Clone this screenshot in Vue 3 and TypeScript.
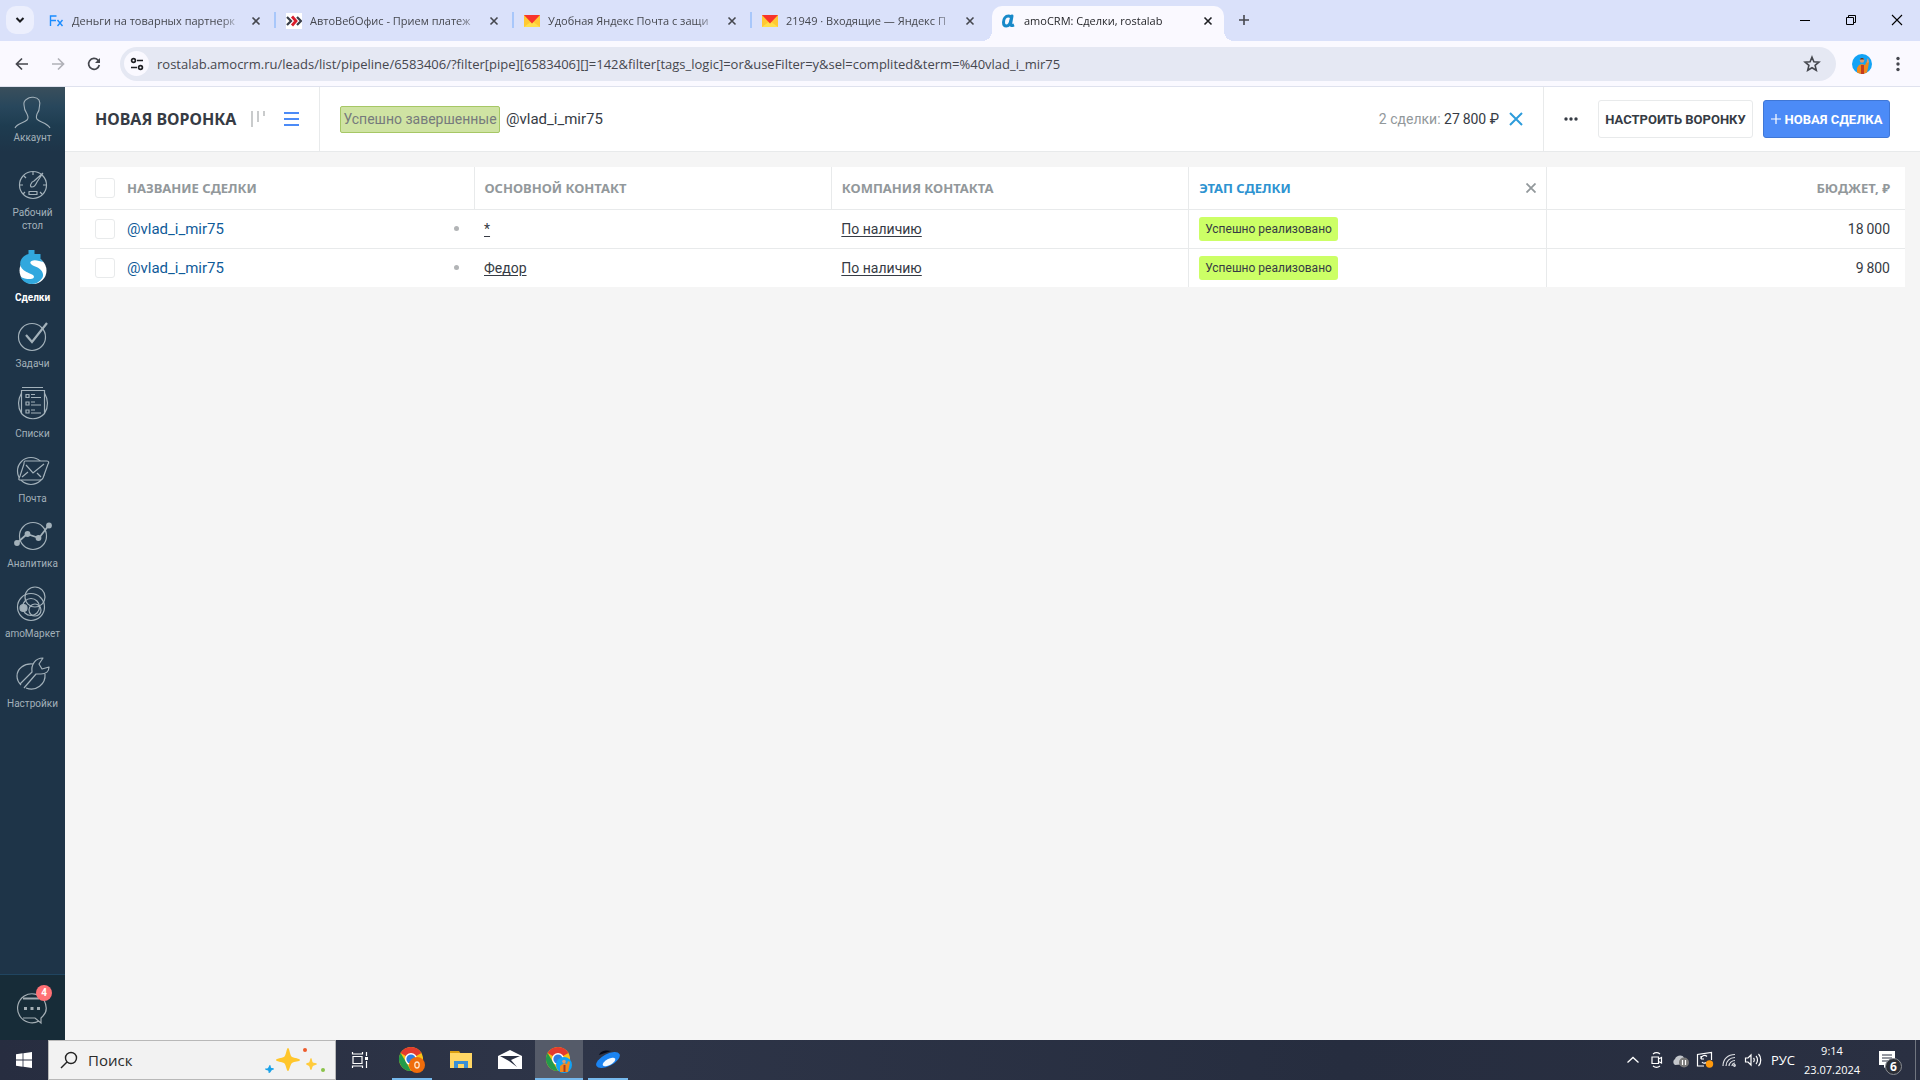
<script setup lang="ts">
import { ref } from 'vue'

interface Tab { icon: string; title: string; active?: boolean }
interface NavItem { icon: string; label: string; gap: string; active?: boolean }
interface Deal { id: number; name: string; contact: string; company: string; stage: string; budget: string }

const tabs: Tab[] = [
  { icon: 'fx', title: 'Деньги на товарных партнерк' },
  { icon: 'avo', title: 'АвтоВебОфис - Прием платеж' },
  { icon: 'mail', title: 'Удобная Яндекс Почта с защи' },
  { icon: 'mail', title: '21949 · Входящие — Яндекс П' },
  { icon: 'amo', title: 'amoCRM: Сделки, rostalab', active: true },
]

const nav: NavItem[] = [
  { icon: 'desk', label: 'Рабочий стол', gap: 'desk' },
  { icon: 'deals', label: 'Сделки', gap: 'deals', active: true },
  { icon: 'tasks', label: 'Задачи', gap: 'tasks' },
  { icon: 'lists', label: 'Списки', gap: 'lists' },
  { icon: 'post', label: 'Почта', gap: 'post' },
  { icon: 'stats', label: 'Аналитика', gap: 'stats' },
  { icon: 'market', label: 'amoМаркет', gap: 'market' },
  { icon: 'settings', label: 'Настройки', gap: 'settings' },
]

const deals: Deal[] = [
  { id: 1, name: '@vlad_i_mir75', contact: '*', company: 'По наличию', stage: 'Успешно реализовано', budget: '18\u2009000' },
  { id: 2, name: '@vlad_i_mir75', contact: 'Федор', company: 'По наличию', stage: 'Успешно реализовано', budget: '9\u2009800' },
]

const url = ref('rostalab.amocrm.ru/leads/list/pipeline/6583406/?filter[pipe][6583406][]=142&filter[tags_logic]=or&useFilter=y&sel=complited&term=%40vlad_i_mir75')
const term = ref('@vlad_i_mir75')
</script>

<template>
  <div class="screen">
    <div class="tabstrip">
      <button class="tab-search" aria-label="Поиск вкладок">
        <svg width="10" height="8" viewBox="0 0 10 8"><path d="M1.500 2 5 5.500 8.500 2" fill="none" stroke="#1b1c20" stroke-width="2" /></svg>
      </button>
      <div class="tabs">
        <div v-for="(t, i) in tabs" :key="i" class="tab" :class="{ active: t.active }">
          <svg class="fav" width="16" height="16" viewBox="0 0 16 16">
            <g v-if="t.icon === 'fx'" fill="none" stroke="#1a8cff" stroke-width="1.400"><path d="M2.500 13V3H8.500M2.500 7.500H8M9.500 7l5 6M14.500 7l-5 6" /></g>
            <g v-else-if="t.icon === 'avo'"><path fill="#fff" d="M0 0h16v16H0z" /><path d="m1 4 4 4-4 4M11 4l4 4-4 4" fill="none" stroke="#3a3f4a" stroke-width="2.200" /><path d="m6 3.500 4 4.500-4 4.500" fill="none" stroke="#d81e2c" stroke-width="2.800" /></g>
            <g v-else-if="t.icon === 'mail'"><path fill="#ffc933" d="M0 2h16v12H0z" /><path fill="#ffe04a" d="m0 14 8-6 8 6z" /><path fill="#f8342c" d="M0 2h16l-8 8.500z" /></g>
            <g v-else><path d="M10 5c-.5-1.500-1.500-2-3-2-3 0-5 3-5 6.200C2 11.500 3 13 4.800 13c2.700 0 4.200-3.500 4.700-6.500L10.500 3l-1.300 7.500c-.2 1.600.6 2.400 1.800 2l1.500-.6" transform="translate(1.500)" fill="none" stroke="#1789c9" stroke-width="3" stroke-linejoin="round" /></g>
          </svg>
          <span class="tab-title">{{ t.title }}</span>
          <button class="tab-close" aria-label="Закрыть вкладку">
            <svg width="10" height="10" viewBox="0 0 10 10"><path d="m1.500 1.500 7 7m0-7-7 7" stroke="currentColor" stroke-width="1.600" /></svg>
          </button>
        </div>
      </div>
      <button class="tab-new" aria-label="Новая вкладка">
        <svg width="12" height="12" viewBox="0 0 12 12"><path d="M6 1v10M1 6h10" stroke="#45474e" stroke-width="1.600" /></svg>
      </button>
      <div class="win">
        <button aria-label="Свернуть"><svg width="12" height="12" viewBox="0 0 12 12"><path d="M1 6.500h10" stroke="#000" /></svg></button>
        <button aria-label="Восстановить"><svg width="12" height="12" viewBox="0 0 12 12"><path d="M1.500 3.500h7v7h-7zM3.500 3.500v-2h7v7h-2" fill="none" stroke="#000" /></svg></button>
        <button aria-label="Закрыть"><svg width="12" height="12" viewBox="0 0 12 12"><path d="m1 1 10 10m0-10L1 11" stroke="#000" stroke-width="1.100" /></svg></button>
      </div>
    </div>

    <div class="toolbar">
      <button class="tool" aria-label="Назад"><svg width="16" height="16" viewBox="0 0 16 16"><path d="M14 8H3M8 2.500 2.500 8 8 13.500" fill="none" stroke="#45474e" stroke-width="1.700" /></svg></button>
      <button class="tool" aria-label="Вперёд"><svg width="16" height="16" viewBox="0 0 16 16"><path d="M2 8h11M8 2.500 13.500 8 8 13.500" fill="none" stroke="#b0b1b8" stroke-width="1.700" /></svg></button>
      <button class="tool" aria-label="Обновить"><svg width="16" height="16" viewBox="0 0 16 16"><path d="M13.300 9A5.400 5.400 0 1 1 12 4.200L13.500 6" fill="none" stroke="#45474e" stroke-width="1.700" /><path d="M14 2v5H9z" fill="#45474e" /></svg></button>
      <div class="omnibox">
        <button class="site" aria-label="Сведения о сайте"><svg width="16" height="16" viewBox="0 0 16 16" fill="none" stroke="#1f2024" stroke-width="1.700"><circle cx="4.500" cy="4.500" r="1.900" /><path d="M8 4.500h6M2 11.500h6" /><circle cx="11.500" cy="11.500" r="1.900" /></svg></button>
        <input v-model="url" class="url" type="text" aria-label="Адресная строка" spellcheck="false" />
        <button class="star" aria-label="В закладки"><svg width="18" height="18" viewBox="0 0 18 18"><path d="m9 2.200 1.900 4.600 5 .4-3.800 3.200 1.200 4.900L9 12.700l-4.300 2.600 1.200-4.900-3.800-3.200 5-.4z" fill="none" stroke="#45474e" stroke-width="1.600" /></svg></button>
      </div>
      <button class="profile" aria-label="Профиль">
        <svg width="20" height="20" viewBox="0 0 20 20"><circle cx="10" cy="10" r="10" fill="#12a3f5" /><path d="M5 18.500V14l2-3 3-1 3 1 2-4 2 1-1 6-1 4.500a10 10 0 0 1-10 0z" fill="#f08a1c" /><circle cx="10" cy="6.500" r="2.200" fill="#d99a72" /><path d="M8 5.500c0-2 4-2 4 0z" fill="#5b3524" /><path d="M9 11h3v9H9z" fill="#c43c20" /><path d="m15 6 1-2 1 4-2 1z" fill="#d99a72" /></svg>
      </button>
      <button class="menu" aria-label="Меню"><svg width="4" height="16" viewBox="0 0 4 16" fill="#45474e"><circle cx="2" cy="2.500" r="1.700" /><circle cx="2" cy="8" r="1.700" /><circle cx="2" cy="13.500" r="1.700" /></svg></button>
    </div>

    <div class="app">
      <nav class="side">
        <a class="account" href="#">
          <svg width="38" height="34" viewBox="0 0 38 34"><path d="M1 32c2-5 9-5 12-8 2-2 1-4 0-6-2-3-3-6-3-9-.5-3 1-5 3-6 3-3 10-2 12 1 1 2 1 4 .5 6 0 3-1 6-2.500 8-1 3-1 5 1 6 3 2.500 9 3 12 8" fill="none" stroke="#a3b1ba" stroke-width="1.100" /></svg>
          <span>Аккаунт</span>
        </a>
        <a v-for="n in nav" :key="n.icon" href="#" class="nav" :class="[n.gap, { on: n.active }]">
          <svg width="40" height="38" viewBox="0 0 40 38" fill="none" stroke="#a3b1ba" stroke-width="1.200">
            <g v-if="n.icon === 'desk'"><circle cx="20" cy="19" r="13.500" /><path d="M20 6v3M7 19h3M30 19h3M11 10l2 2M10 28l2-2M29 28l-2-2M30 7 21 15c-3 1-5 6-2 6s4-3 5-5l6-9M16 25.500h8v3h-8z" stroke-linejoin="round" /></g>
            <g v-else-if="n.icon === 'deals'" stroke="none"><circle cx="20" cy="22.500" r="13.500" fill="#fff" /><path d="M15.500 2h6v4h6v5l3 3c-4-1-9-3-12-1-3 2 0 4 5 6 7 3 8 9 5 12-2 3-6 5-10 5-5 0-9-3-11-7 4 2 11 3 13 1 2-3-3-4-7-6-6-3-8-8-5-13 2-3 4-4 7-5z" fill="#31a8de" /></g>
            <g v-else-if="n.icon === 'tasks'"><circle cx="19" cy="20" r="13.500" /><path d="m13 18 6 7L34 6" stroke-width="2.200" /></g>
            <g v-else-if="n.icon === 'lists'"><path d="M9 2.500h21M8.500 5.500h23v23c-6 7-17 7-23 0zM8.500 8C4.500 15 4.500 22 8.500 28.500M31.500 8c4 7 4 14 0 20.500" /><path d="M13 9.500h3v3h-3zM13 17h3v3h-3zM13 25h3v3h-3zM18 9.500h4M18 12.500h10M18 17h4M18 20h10M18 25h4M18 28h10" /></g>
            <g v-else-if="n.icon === 'post'"><circle cx="18" cy="19" r="13.500" /><path d="M12 9h22c2 0 2 2 1 3l-5 14c-1 2-2 2-3 2H7c-2 0-1-2 0-4l4-12c0-2 0-3 1-3z" fill="#1e3448" /><path d="m13 13 7 8 11-9M9 25l6-5M24 21l4 4" /></g>
            <g v-else-if="n.icon === 'stats'"><circle cx="20" cy="19" r="13.500" /><path d="m4 26 10-9 12 4L36 8" stroke-width="1.800" /><g fill="#a3b1ba" stroke="none"><circle cx="4" cy="26" r="2.900" /><circle cx="14.500" cy="17" r="2.900" /><circle cx="25.500" cy="21" r="2.900" /><circle cx="36" cy="8.500" r="2.900" /></g></g>
            <g v-else-if="n.icon === 'market'"><circle cx="18" cy="22" r="13.500" /><circle cx="22" cy="12" r="10" /><circle cx="18" cy="22" r="8.500" /><circle cx="22" cy="25" r="6" /><circle cx="10.500" cy="23" r="3.500" fill="#a3b1ba" /></g>
            <g v-else><path d="M20 9C11 8 4 14 4 21c0 4 2 7 4 9M13 33c10 4 20-4 19-14" /><path d="M7 29 19 17c-1-7 3-14 11-14l-4 6 3 5 7-2c0 4-3 7-8 7h-5L11 33" stroke-linejoin="round" /></g>
          </svg>
          <span>{{ n.label }}</span>
        </a>
        <button class="chat" aria-label="Чаты">
          <svg width="34" height="34" viewBox="0 0 34 34" fill="none" stroke="#a3adb3" stroke-width="1.200"><path d="M23 30a14.500 14.500 0 1 1 5-21c3 6 3 12-1 16l-2 2v5l-6-5H7" /><path d="M7 7.500h16" stroke-width="2" /><g fill="#a3adb3" stroke="none"><path d="M8 16h3v3H8zM14.500 16h3v3h-3zM21 16h3v3h-3z" /></g></svg>
          <span class="badge">4</span>
        </button>
      </nav>

      <main class="main">
        <header class="head">
          <div class="head-left">
            <h1>НОВАЯ ВОРОНКА</h1>
            <button class="view kanban" aria-label="Воронка"><svg width="16" height="16" viewBox="0 0 16 16" fill="#c9cbcc"><path d="M1 0h2v16H1zM7 0h2v11H7zM13 0h2v5h-2z" /></svg></button>
            <button class="view" aria-label="Список"><svg width="16" height="16" viewBox="0 0 16 16" fill="#4c8bf7"><path d="M0 1h15v2H0zM0 7h15v2H0zM0 13h15v2H0z" /></svg></button>
          </div>
          <div class="head-search">
            <button class="chip">Успешно завершенные</button>
            <input v-model="term" type="text" class="term" aria-label="Поиск и фильтр" />
            <div class="sum"><span>2 сделки:</span> <b>27&#8201;800 ₽</b></div>
            <button class="clear" aria-label="Сбросить"><svg width="14" height="14" viewBox="0 0 14 14"><path d="m1 1 12 12m0-12L1 13" stroke="#2d9cdb" stroke-width="2" /></svg></button>
          </div>
          <div class="head-actions">
            <button class="more" aria-label="Ещё"><svg width="14" height="4" viewBox="0 0 14 4" fill="#363b44"><circle cx="2" cy="2" r="1.700" /><circle cx="7" cy="2" r="1.700" /><circle cx="12" cy="2" r="1.700" /></svg></button>
            <button class="btn plain">НАСТРОИТЬ ВОРОНКУ</button>
            <button class="btn primary"><svg width="10" height="10" viewBox="0 0 10 10"><path d="M5 0v10M0 5h10" stroke="#fff" stroke-width="1.200" /></svg>НОВАЯ СДЕЛКА</button>
          </div>
        </header>

        <div class="table-wrap">
          <table>
            <colgroup><col class="c-name" /><col /><col /><col /><col class="c-budget" /></colgroup>
            <thead>
              <tr>
                <th><div class="cell"><input type="checkbox" aria-label="Выбрать все" /><span>НАЗВАНИЕ СДЕЛКИ</span></div></th>
                <th>ОСНОВНОЙ КОНТАКТ</th>
                <th>КОМПАНИЯ КОНТАКТА</th>
                <th class="sorted"><div class="cell between"><span>ЭТАП СДЕЛКИ</span><button aria-label="Сбросить сортировку"><svg width="10" height="10" viewBox="0 0 10 10"><path d="m.5.5 9 9m0-9-9 9" stroke="#92989b" stroke-width="1.800" /></svg></button></div></th>
                <th class="num">БЮДЖЕТ, ₽</th>
              </tr>
            </thead>
            <tbody>
              <tr v-for="d in deals" :key="d.id">
                <td><div class="cell"><input type="checkbox" :aria-label="d.name" /><a href="#" class="deal">{{ d.name }}</a><i class="dot"></i></div></td>
                <td><a href="#" class="ref">{{ d.contact }}</a></td>
                <td><a href="#" class="ref">{{ d.company }}</a></td>
                <td class="line"><span class="stage">{{ d.stage }}</span></td>
                <td class="num line">{{ d.budget }}</td>
              </tr>
            </tbody>
          </table>
        </div>
      </main>
    </div>

    <footer class="taskbar">
      <button class="start" aria-label="Пуск"><svg width="16" height="16" viewBox="0 0 16 16" fill="#fff"><path d="M0 2.300 6.600 1.300v6.300H0zM7.400 1.200 16 0v7.600H7.400zM0 8.400h6.600v6.300L0 13.700zM7.400 8.400H16V16l-8.600-1.200z" /></svg></button>
      <label class="find">
        <svg width="18" height="18" viewBox="0 0 18 18" fill="none" stroke="#222" stroke-width="1.400"><circle cx="11" cy="7" r="5.500" /><path d="m7 11-6 6" /></svg>
        <input type="text" placeholder="Поиск" aria-label="Поиск" />
        <svg width="62" height="26" viewBox="0 0 62 26"><path d="M24 1c1.500 0 2 8 4 9s8 1.500 8 3-6 1.500-8 3-2.500 8-4 8-2-7-4-8-8-1.500-8-3 6-2 8-3 2.500-9 4-9z" fill="#ffc62b" /><path d="M47 11c1 0 1 4 2 4.500s4 .5 4 1.500-3 1-4 2-1 4-2 4-1-3-2-4-3-1-3-2 2-1 3-1.500 1-4.500 2-4.500z" fill="#ffcb3c" /><path d="M6 18c1 0 .5 3 1.500 3s2.500 0 2.500 1-2 .5-2.500 1.500S6 26 5 26s0-2-1-2.500S1 23 1 22s2 0 3-1 1-3 2-3z" fill="#1ba2e8" /><circle cx="41" cy="3" r="2" fill="#ee5b2b" /><circle cx="59" cy="23" r="2" fill="#8bc34a" /></svg>
      </label>
      <div class="apps">
        <button class="views" aria-label="Представление задач"><svg width="18" height="18" viewBox="0 0 18 18" fill="none" stroke="#fff" stroke-width="1.200"><path d="M2 5.500h9v7H2zM1.500 1v2h10V1M1.500 17v-2h10v2M15.500 1v4M15.500 10v7" /><path d="M14 6h3v3h-3z" fill="#fff" stroke="none" /></svg></button>
        <button class="run" aria-label="Chrome">
          <svg width="28" height="28" viewBox="0 0 28 28"><circle cx="13" cy="13" r="12" fill="#fbc116" /><path d="M13 13 2.600 7a12 12 0 0 1 20.800 0z" fill="#e33b2e" /><path d="M2.600 7 8 16l5 9A12 12 0 0 1 2.600 7z" fill="#229a4b" /><circle cx="13" cy="13" r="6" fill="#fff" /><circle cx="13" cy="13" r="4.600" fill="#2f7de1" /><circle cx="19" cy="19" r="8" fill="#ef6c0b" /><ellipse cx="19" cy="19" rx="2.200" ry="3" fill="none" stroke="#ffe4c8" stroke-width="1.300" /></svg>
        </button>
        <button aria-label="Проводник"><svg width="22" height="20" viewBox="0 0 22 20"><path d="M0 1h9l2 3H0z" fill="#dba011" /><path d="M0 3h22v15H0z" fill="#ffd765" /><path d="M4 18v-7h14v7h-4v-4H8v4z" fill="#3b90d6" /></svg></button>
        <button aria-label="Почта"><svg width="24" height="20" viewBox="0 0 24 20"><path d="M0 6 12 0l12 6v13H0z" fill="#fff" /><path d="M2 6h20L13 10l6 7-8-6z" fill="#2a3042" /></svg></button>
        <button class="run current" aria-label="Chrome amoCRM">
          <svg width="28" height="28" viewBox="0 0 28 28"><circle cx="13" cy="13" r="12" fill="#fbc116" /><path d="M13 13 2.600 7a12 12 0 0 1 20.800 0z" fill="#e33b2e" /><path d="M2.600 7 8 16l5 9A12 12 0 0 1 2.600 7z" fill="#229a4b" /><circle cx="13" cy="13" r="6" fill="#fff" /><circle cx="13" cy="13" r="4.600" fill="#2f7de1" /><circle cx="19" cy="19" r="8" fill="#12a3f5" /><path d="M15 26v-6l4-3 3 1 1-3 2 1-2 10z" fill="#f08a1c" /><circle cx="19" cy="15.500" r="1.800" fill="#d99a72" /><path d="M18.500 19h2v7h-2z" fill="#a83a20" /></svg>
        </button>
        <button class="run" aria-label="Браузер"><svg width="26" height="22" viewBox="0 0 26 22"><path d="M4 6c2-5 8-5 12-4z" fill="#060a18" /><ellipse cx="13" cy="11" rx="13" ry="6" transform="rotate(-28 13 11)" fill="#1b84f2" /><ellipse cx="14" cy="13" rx="7" ry="3" transform="rotate(-28 14 13)" fill="#f4faff" /></svg></button>
      </div>
      <div class="tray">
        <button aria-label="Скрытые значки"><svg width="14" height="14" viewBox="0 0 14 14"><path d="m1.500 9.500 5.500-5 5.500 5" fill="none" stroke="#fff" stroke-width="1.300" /></svg></button>
        <button aria-label="Камера"><svg width="14" height="16" viewBox="0 0 14 16" fill="none" stroke="#fff" stroke-width="1.200"><path d="M2 5h6.500v6.500H2zM8.500 7l3-1.500v5.500l-3-1.500M3 2c2-1.500 5-1.500 7 0M3 14c2 1.500 5 1.500 7 0" /></svg></button>
        <button aria-label="OneDrive"><svg width="18" height="16" viewBox="0 0 18 16"><path d="M3 13a3.500 3.500 0 0 1 0-6c1-4 8-5 9-1 3 0 4 3 3 6z" fill="#c3c6cb" /><circle cx="12" cy="10.500" r="5" fill="#777" /><path d="M10.500 8v5M13.500 8v5" stroke="#fff" stroke-width="1.200" /></svg></button>
        <button aria-label="Обновления"><svg width="18" height="18" viewBox="0 0 18 18"><path d="M8 15H1.500V3.500L15.500 1.500V9" fill="none" stroke="#fff" stroke-width="1.200" /><path d="M11 5.500A3.500 3.500 0 0 0 5 8M5 8V5M5 8h3M6 11c1 1.500 3 1.500 4 .5" fill="none" stroke="#fff" stroke-width="1.200" /><circle cx="13.500" cy="13" r="3.700" fill="#ff9a0e" /></svg></button>
        <button aria-label="Сеть"><svg width="14" height="14" viewBox="0 0 14 14" fill="none" stroke="#dfe1e5" stroke-width="1.200"><path d="M1 13C1 6 6 1.500 13 1.500M4 13c0-5 4-8.500 9-8.500M7 13c0-3 3-5.500 6-5.500M10 13c0-1.500 1.500-3 3-3" /><circle cx="12.500" cy="12.500" r=".8" /></svg></button>
        <button aria-label="Громкость"><svg width="18" height="14" viewBox="0 0 18 14" fill="none" stroke="#fff" stroke-width="1.200"><path d="M1.500 5h2.500l3-3v10l-3-3H1.500zM9.500 5c1 1 1 3 0 4M12 3c2 2 2 6 0 8M14.500 1c3 3 3 9 0 12" /></svg></button>
        <button class="lang">РУС</button>
        <button class="clock"><span>9:14</span><span>23.07.2024</span></button>
        <button class="notes" aria-label="Уведомления"><svg width="16" height="18" viewBox="0 0 16 18"><path d="M0 0h16v14H9l-4 3v-3H0z" fill="#fff" /><path d="M3 4h10M3 7h10M3 10h6" stroke="#2a3042" stroke-width="1.200" /></svg><span>6</span></button>
        <button class="peek" aria-label="Свернуть все окна"></button>
      </div>
    </footer>
  </div>
</template>

<style>
body {
  margin: 0;
}
</style>

<style scoped>
.screen {
  display: flex;
  flex-direction: column;
  min-height: 100vh;
  background: #f5f5f5;
  font-family: Roboto, "Liberation Sans", sans-serif;
  font-size: 14px;
  color: #363b44;
}
.screen * {
  box-sizing: border-box;
}
button {
  display: flex;
  align-items: center;
  justify-content: center;
  flex: none;
  margin: 0;
  padding: 0;
  border: 0;
  background: none;
  font: inherit;
  color: inherit;
  white-space: nowrap;
}
input {
  margin: 0;
  padding: 0;
  border: 0;
  outline: 0;
  background: none;
  font: inherit;
  color: inherit;
}
svg {
  display: block;
  flex: none;
}
a {
  color: inherit;
  text-decoration: none;
}

/* browser frame */
.tabstrip {
  display: flex;
  height: 41px;
  background: #dae1fa;
  font-family: "Open Sans", "Noto Sans", sans-serif;
  font-size: 11px;
}
.tab-search {
  width: 28px;
  height: 28px;
  margin: 6px 6px 0;
  border-radius: 10px;
  background: #eceffd;
}
.tabs {
  display: flex;
  gap: 6px;
  padding-top: 6px;
}
.tab {
  position: relative;
  display: flex;
  align-items: center;
  width: 232px;
  height: 35px;
  padding: 0 8px 6px 8px;
  color: #45474e;
}
.tab:not(.active)::after {
  content: "";
  position: absolute;
  right: -4px;
  top: 6px;
  width: 2px;
  height: 16px;
  background: #a8c7fa;
}
.tab:nth-child(4)::after {
  display: none;
}
.tab.active {
  border-radius: 10px 10px 0 0;
  background: #faf9ff;
  color: #1f2024;
}
.tab.active::before,
.tab.active::after {
  content: "";
  position: absolute;
  bottom: 0;
  width: 10px;
  height: 10px;
}
.tab.active::before {
  left: -10px;
  background: radial-gradient(circle at 0 0, transparent 10px, #faf9ff 10px);
}
.tab.active::after {
  right: -10px;
  background: radial-gradient(circle at 100% 0, transparent 10px, #faf9ff 10px);
}
.tab-title {
  flex: 1;
  min-width: 0;
  margin-left: 8px;
  white-space: nowrap;
  mask-image: linear-gradient(to right, #000 148px, transparent 172px);
}
.tab-close {
  width: 16px;
  height: 16px;
  margin-left: 8px;
}
.tab-new {
  width: 28px;
  height: 28px;
  margin: 6px 0 0 6px;
}
.win {
  display: flex;
  margin-left: auto;
}
.win button {
  width: 46px;
  height: 40px;
}
.toolbar {
  display: flex;
  align-items: center;
  height: 46px;
  padding: 0 12px 0 4px;
  border-bottom: 1px solid #dfe2ee;
  background: #faf9ff;
  color: #45474e;
}
.tool {
  width: 36px;
  height: 34px;
}
.omnibox {
  display: flex;
  align-items: center;
  flex: 1;
  height: 34px;
  margin-left: 8px;
  padding: 0 15px 0 4px;
  border-radius: 17px;
  background: #e5e8f3;
}
.site {
  width: 25px;
  height: 25px;
  border-radius: 50%;
  background: #faf9ff;
}
.url {
  flex: 1;
  min-width: 0;
  margin-left: 8px;
  font: 13px "Open Sans", "Noto Sans", sans-serif;
}
.profile {
  width: 20px;
  height: 20px;
  margin-left: 16px;
}
.menu {
  width: 32px;
  height: 32px;
  margin-left: 10px;
  margin-right: -6px;
}

/* side navigation */
.app {
  display: flex;
  flex: 1;
}
.side {
  display: flex;
  flex-direction: column;
  flex: none;
  width: 65px;
  background: #1e3448;
  color: #a3b1ba;
  font-size: 10px;
  line-height: 13px;
  text-align: center;
}
.account {
  display: flex;
  flex-direction: column;
  align-items: center;
  height: 65px;
  padding-top: 9px;
  background: linear-gradient(#3a4f5c, #28475c 30%, #1e3c50 60%, #1e3448);
}
.account span {
  margin-top: 1px;
}
.nav {
  display: flex;
  flex-direction: column;
  align-items: center;
}
.nav span {
  max-width: 60px;
}
.nav.desk {
  padding-top: 14px;
}
.nav.desk span {
  max-width: 48px;
  margin-top: 2px;
}
.nav.deals {
  padding-top: 16px;
}
.nav.deals span {
  margin-top: 5px;
}
.nav.tasks {
  padding-top: 13px;
}
.nav.tasks span,
.nav.post span,
.nav.stats span {
  margin-top: 2px;
}
.nav.lists,
.nav.market,
.nav.settings {
  padding-top: 15px;
}
.nav.lists span,
.nav.market span,
.nav.settings span {
  margin-top: 4px;
}
.nav.post,
.nav.stats {
  padding-top: 12px;
}
.nav.on span {
  color: #fff;
  font-weight: 700;
}
.chat {
  position: relative;
  width: 65px;
  height: 66px;
  margin-top: auto;
  border-top: 1px solid #204560;
  background: #172c38;
}
.badge {
  position: absolute;
  top: 10px;
  right: 13px;
  width: 16px;
  height: 16px;
  border-radius: 50%;
  background: #ff7175;
  color: #fff;
  font-weight: 700;
  line-height: 16px;
}

/* page header */
.main {
  flex: 1;
  min-width: 0;
}
.head {
  display: flex;
  height: 65px;
  border-bottom: 1px solid #e8eaeb;
  background: #fff;
}
.head-left {
  display: flex;
  align-items: center;
  width: 255px;
  padding-left: 30px;
  border-right: 1px solid #e8eaeb;
}
h1 {
  width: 155px;
  margin: 0;
  font: 700 16px "Noto Sans", sans-serif;
  white-space: nowrap;
}
.view {
  width: 16px;
  height: 16px;
}
.kanban {
  margin-right: 18px;
}
.head-search {
  display: flex;
  align-items: center;
  flex: 1;
  padding: 0 20px;
}
.chip {
  height: 27px;
  width: 160px;
  border: 1px solid #a6c765;
  border-radius: 2px;
  background: #cfe3a3;
  color: #767a7c;
}
.term {
  flex: 1;
  min-width: 0;
  margin-left: 6px;
  font-size: 15px;
}
.sum span {
  color: #92989b;
}
.sum b {
  font-weight: 400;
}
.clear {
  margin-left: 10px;
}
.head-actions {
  display: flex;
  align-items: center;
  padding: 0 30px 0 20px;
  border-left: 1px solid #e8eaeb;
}
.more {
  margin-right: 20px;
}
.btn {
  height: 38px;
  border: 1px solid #e8eaeb;
  border-radius: 3px;
  font-size: 13px;
  font-weight: 700;
}
.plain {
  width: 155px;
  margin-right: 10px;
}
.primary {
  gap: 4px;
  width: 127px;
  border-color: #4077d6;
  background: #4c8bf7;
  color: #fff;
}

/* deals table */
.table-wrap {
  padding: 15px 15px 0;
}
table {
  width: 100%;
  table-layout: fixed;
  border-collapse: collapse;
  background: #fff;
}
.c-name {
  width: 394px;
}
.c-budget {
  width: 359px;
}
th,
td {
  height: 39px;
  padding: 0 15px 0 10px;
  border-bottom: 1px solid #e8eaeb;
  text-align: left;
}
th {
  height: 42px;
  color: #92989b;
  font: 700 13px "Noto Sans", sans-serif;
}
th + th,
.line {
  border-left: 1px solid #e8eaeb;
}
th:first-child,
td:first-child {
  padding-left: 15px;
}
tbody tr:last-child td {
  border-bottom: 0;
}
.num {
  text-align: right;
}
.cell {
  display: flex;
  align-items: center;
  gap: 12px;
}
.between {
  justify-content: space-between;
  margin-right: -5px;
}
.sorted {
  color: #2d93d1;
}
input[type="checkbox"] {
  appearance: none;
  width: 20px;
  height: 20px;
  border: 1px solid #e8eaeb;
  border-radius: 3px;
  background: #fff;
}
.deal {
  color: #0f5b99;
  font-size: 15px;
}
.dot {
  width: 5px;
  height: 5px;
  margin-left: auto;
  border-radius: 50%;
  background: #b2b4b6;
}
.ref {
  text-decoration: underline;
  text-underline-offset: 2px;
}
.stage {
  display: inline-block;
  padding: 0 6px;
  border-radius: 3px;
  background: #ccff66;
  font-size: 12px;
  line-height: 24px;
  vertical-align: middle;
}

/* desktop taskbar */
.taskbar {
  display: flex;
  height: 40px;
  background: linear-gradient(to right, #272d40, #2e3548 30%, #262d3f 70%, #2a3042);
  color: #fff;
  font-family: "Open Sans", "Noto Sans", sans-serif;
}
.start {
  width: 48px;
}
.find {
  display: flex;
  align-items: center;
  width: 288px;
  padding: 0 9px 0 11px;
  border: 1px solid #b8b8b8;
  background: #f2f2f2;
  color: #2b2b2b;
}
.find input {
  flex: 1;
  min-width: 0;
  margin-left: 10px;
  font-size: 15px;
}
.find input::placeholder {
  color: #2b2b2b;
  opacity: 1;
}
.apps {
  display: flex;
  gap: 1px;
}
.apps button {
  position: relative;
  width: 48px;
  height: 40px;
}
.apps .views {
  margin-right: 3px;
}
.run::after {
  content: "";
  position: absolute;
  left: 4px;
  right: 4px;
  bottom: 0;
  height: 2px;
  background: #76b9ed;
}
.current {
  background: #555b69;
}
.current::after {
  left: 0;
  right: 0;
}
.tray {
  display: flex;
  align-items: center;
  margin-left: auto;
  font-size: 12px;
  line-height: 19px;
}
.tray button {
  width: 24px;
  height: 40px;
}
.tray .lang {
  width: 36px;
  font-size: 13px;
}
.tray .clock {
  flex-direction: column;
  width: 62px;
  font-size: 11px;
}
.tray .notes {
  position: relative;
  width: 48px;
}
.notes span {
  position: absolute;
  left: 22px;
  top: 18px;
  width: 17px;
  height: 17px;
  border: 1px solid #8a8d94;
  border-radius: 50%;
  background: #2b2e36;
  font-weight: 700;
  line-height: 15px;
}
.tray .peek {
  width: 5px;
  margin-left: 4px;
  border-left: 1px solid #70757f;
}
</style>
